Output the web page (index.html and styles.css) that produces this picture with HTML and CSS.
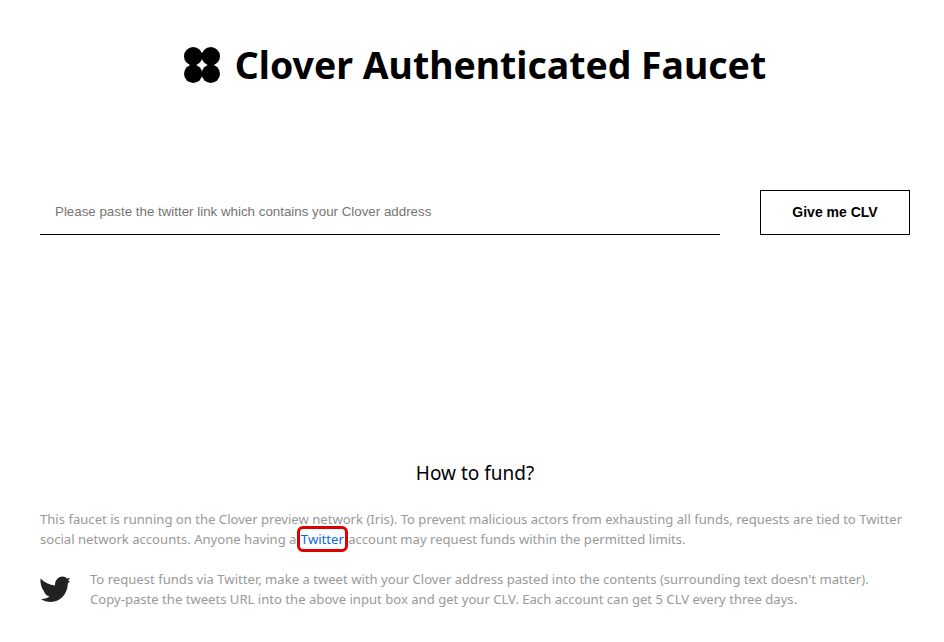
FILE: index.html
```html
<!DOCTYPE html>
<html lang="en">
<head>
    <meta charset="UTF-8">
    <title>Clover Authenticated Faucet</title>
    <link rel="stylesheet" href="styles.css">
</head>
<body>
    <div class="title-row">
        <svg class="logo" width="36" height="36" viewBox="0 0 36 36">
            <circle cx="9.2" cy="9.2" r="9.2"/>
            <circle cx="26.8" cy="9.2" r="9.2"/>
            <circle cx="9.2" cy="26.8" r="9.2"/>
            <circle cx="26.8" cy="26.8" r="9.2"/>
        </svg>
        <h1>Clover Authenticated Faucet</h1>
    </div>

    <form class="fund-form">
        <input type="text" class="link-input" placeholder="Please paste the twitter link which contains your Clover address">
        <button type="button" class="give-button">Give me CLV</button>
    </form>

    <h2>How to fund?</h2>

    <p class="intro">This faucet is running on the Clover preview network (Iris). To prevent malicious actors from exhausting all funds, requests are tied to Twitter social network accounts. Anyone having a <a href="#" class="twitter-link">Twitter</a> account may request funds within the permitted limits.</p>

    <div class="tweet-row">
        <svg class="bird" width="30" height="30" viewBox="0 0 30 30">
            <path d="M0.5 4.5C4.5 8.5 9.5 11 15 11.5C14.8 6.5 18 2.5 22.5 2.5C24.5 2.5 26 3.3 27 4.5L30 4L28 7L30 7L27.8 9.5C27.8 19.5 20.5 28 11 28C7 28 3.5 26.8 1 25C4.5 25.2 7.5 24.2 9.5 22.5C6.5 22 4.5 19.5 3.8 17C1.5 14 0 9 0.5 4.5Z"/>
        </svg>
        <p>To request funds via Twitter, make a tweet with your Clover address pasted into the contents (surrounding text doesn't matter). Copy-paste the tweets URL into the above input box and get your CLV. Each account can get 5 CLV every three days.</p>
    </div>
</body>
</html>
```

FILE: styles.css
```css
* {
    margin: 0;
    padding: 0;
    box-sizing: border-box;
}

body {
    font-family: "Noto Sans", "Liberation Sans", sans-serif;
    background: #fff;
    padding: 40px 34px 0 40px;
    color: #000;
}

/* Titulo */
.title-row {
    display: flex;
    justify-content: center;
    align-items: center;
    gap: 15px;
}

.title-row h1 {
    font-size: 37.4px;
    font-weight: 700;
    line-height: 50px;
}

.logo {
    display: block;
}

/* Formulario */
.fund-form {
    display: flex;
    justify-content: space-between;
    margin-top: 100px;
}

.link-input {
    width: 680px;
    height: 45px;
    border: none;
    border-bottom: 1px solid #000;
    padding: 0 15px 2px;
    font-family: "Liberation Sans", sans-serif;
    font-size: 13.333px;
    outline: none;
}

.link-input::placeholder {
    color: #757575;
    opacity: 1;
}

.give-button {
    width: 150px;
    height: 45px;
    background: #fff;
    border: 1px solid #000;
    padding-bottom: 2px;
    font-family: "Liberation Sans", sans-serif;
    font-size: 14px;
    font-weight: 700;
    cursor: pointer;
}

/* Texto */
h2 {
    margin-top: 224px;
    font-size: 19px;
    font-weight: 400;
    line-height: 28px;
    text-align: center;
}

.intro, .tweet-row p {
    font-size: 13.1px;
    line-height: 20px;
    color: #999;
}

.intro {
    margin-top: 22px;
}

.twitter-link {
    color: #0a66e0;
    text-decoration: none;
    outline: 3px solid #e00000;
    border-radius: 3px;
    padding: 1px 1px;
}

.tweet-row {
    display: flex;
    align-items: center;
    gap: 20px;
    margin-top: 20px;
}

.tweet-row p {
    max-width: 800px;
}

.bird {
    flex: none;
    fill: #222;
}
```
